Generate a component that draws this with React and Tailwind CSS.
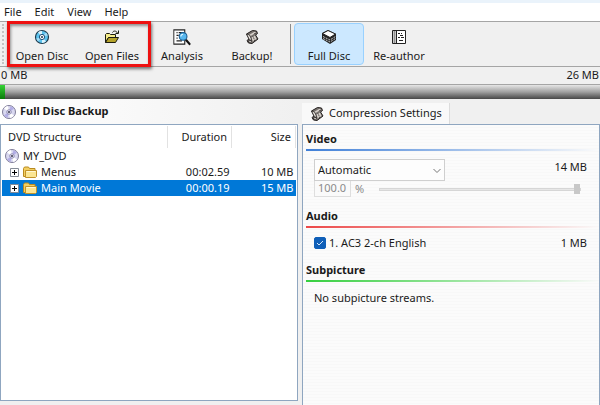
import { useState } from 'react'

const DiscIcon = () => (
  <svg className="size-4" viewBox="0 0 16 16">
    <circle cx="8" cy="8" r="6.5" fill="#5cc3ee" stroke="#1d3a4c" strokeWidth="1.2" />
    <path d="M8 8 4 3.2A6 6 0 0 1 8 2zM8 8l4 4.6A6 6 0 0 1 8 14z" fill="#d9f3fd" />
    <path d="M8 8 2.2 9.5A6 6 0 0 0 4 12.4zM8 8l5.8-1.6A6 6 0 0 0 12 3.5z" fill="#a3dcf5" />
    <circle cx="8" cy="8" r="2.6" fill="#fff" stroke="#1b4f78" />
    <circle cx="8" cy="8" r="1" fill="#1d3a4c" />
  </svg>
)

const OpenFolderIcon = () => (
  <svg className="size-4" viewBox="0 0 16 16">
    <path d="M1.5 13.5v-8l1-1h3l1 1h5v3h-7z" fill="#f5ec8a" stroke="#1c1c10" />
    <path d="m1.5 13.5 3-5h10l-3 5z" fill="#b5a32a" stroke="#1c1c10" />
    <path d="M8.5 3.5c1-2 3.5-2 5 .5M14.5 1.5v3h-3" fill="none" stroke="#1c1c10" />
  </svg>
)

const AnalysisIcon = () => (
  <svg className="size-4 scale-110" viewBox="0 0 16 16">
    <path d="M.5 1.5h10v13H.5z" fill="#fff" stroke="#222" />
    <path d="M3 4h1M5 4h4M3 6.5h2M3 9h1M3 11.5h5" stroke="#222" />
    <circle cx="9" cy="7.5" r="3.5" fill="#58b7ee" stroke="#1a5c91" />
    <path d="M7 7.5A2 2 0 0 1 9 5.5" stroke="#e3f7ff" fill="none" />
    <path d="m11.5 10.5 4 4.5" stroke="#111" strokeWidth="2" />
  </svg>
)

// strip of film curled at both ends
const FilmIcon = () => (
  <svg className="size-4" viewBox="0 0 16 16">
    <path d="M2.500 5 8.500 1.500l4 .5 1 2.500-2 1.500 2.500 4-6 4.500-3.500-.5-1.500-2.500 2-1.500z" fill="#77716d" stroke="#231f1e" />
    <path d="M5 6 10.500 2.800l1.500 1L6.500 7zM7.500 8.500l3.500-2 1.500 3.500L8.500 12.500z" fill="#d6d0ca" />
    <path d="M2.500 5 5.500 6l2.500 5.500-2.500-.8zM4 12.200l2-1 1.500 1-1.300 1.300z" fill="#f0ebe6" stroke="#231f1e" strokeWidth=".7" />
    <path d="m10.500 4.500 2 .2M9 7.500l2 4.500" fill="none" stroke="#231f1e" strokeDasharray="1 1" />
  </svg>
)

const StackIcon = () => (
  <svg className="size-4" viewBox="0 0 16 16">
    <path d="m1 4 6-3 8 4v6l-6 4-8-5z" fill="#222" />
    <path d="m1.5 4.5 5.5-3L14.5 5 9 8.5z" fill="#fff" stroke="#222" />
    <path d="M2 7.5 9 11l5.5-3.5M2 9.5 9 13l5.5-3.5" fill="none" stroke="#c9c9c9" strokeDasharray="2 1" />
  </svg>
)

const NotebookIcon = () => (
  <svg className="size-4" viewBox="0 0 16 16">
    <path d="M1.5 1.5h13v13h-13zM5.5 1.5v13" fill="#fff" stroke="#222" />
    <path d="M3.5 2.5v12" stroke="#222" strokeWidth="2" strokeDasharray="1 1" />
    <path d="M7 4.5h2M10 4.5h1M9 6.5h3M7 8.5h2M10 8.5h3M8 11.5h4" stroke="#222" />
  </svg>
)

const DvdIcon = () => (
  <svg className="size-4 shrink-0" viewBox="0 0 16 16">
    <circle cx="8" cy="8" r="6.5" fill="#d9d8f0" stroke="#7f7c98" />
    <path d="M8 8 3 4.5A6 6 0 0 1 7 2zM8 8l5 3.5A6 6 0 0 1 9 14z" fill="#fff" />
    <path d="M8 8 9.5 2.2A6 6 0 0 1 13 4.7zM8 8 6.5 13.8A6 6 0 0 1 3 11.3z" fill="#b3aee6" />
    <circle cx="8" cy="8" r="2.2" fill="#f7f7ff" stroke="#8a86ad" />
    <circle cx="8" cy="8" r="1" fill="#33304a" />
  </svg>
)

const FolderIcon = () => (
  <svg className="size-4 shrink-0" viewBox="0 0 16 16">
    <path d="M1.5 12.5v-8l1-1.5h4l1 1.5h5.5v8z" fill="#f3cf62" stroke="#b98a1f" />
    <path d="M3.5 13.5v-7h11v6l-1 1z" fill="#fbe694" stroke="#c2932a" />
    <path d="M4.5 7.5h9" stroke="#fff8d6" />
  </svg>
)

const ExpandIcon = () => (
  <svg className="size-[9px]" viewBox="0 0 9 9">
    <path d="M.5.5h8v8h-8z" fill="#fff" stroke="#848b96" />
    <path d="M2 4.5h5M4.5 2v5" stroke="#000" />
  </svg>
)

const ToolButton = ({ label, icon: Icon, active, onClick }) => (
  <button
    type="button"
    onClick={onClick}
    className={`w-[70px] h-[42px] flex flex-col items-center pt-[5px] rounded-sm border ${active ? 'bg-[#cce8ff] border-[#99d1ff]' : 'border-transparent'}`}
  >
    <Icon />
    <span className="mt-[3px] leading-4 whitespace-nowrap">{label}</span>
  </button>
)

const Section = ({ title, line, children }) => (
  <section>
    <h2 className="font-bold leading-4">{title}</h2>
    <div className={`h-0.5 mt-0.5 bg-linear-to-r ${line} to-transparent`} />
    {children}
  </section>
)

const rows = [
  { name: 'Menus', duration: '00:02.59', size: '10 MB' },
  { name: 'Main Movie', duration: '00:00.19', size: '15 MB' },
]

export default function App() {
  const [mode, setMode] = useState('Full Disc')
  const [selected, setSelected] = useState('Main Movie')

  return (
    <div className="min-h-screen flex flex-col bg-[#f0f0f0] text-[#1a1a1a] text-[11px] font-['Noto_Sans',sans-serif]">
      <nav className="h-[21px] flex items-center gap-[13px] px-1 border-t-3 border-[#eaf3fb] bg-white leading-4">
        {['File', 'Edit', 'View', 'Help'].map(item => (
          <button key={item} type="button">{item}</button>
        ))}
      </nav>

      <div className="h-[46px] flex items-center border-y border-[#a5a5a5]">
        <div className="h-10 ml-0.5 mr-[3px] border-l-2 border-dotted border-[#c4c4c4]" />
        <div className="relative flex">
          <ToolButton label="Open Disc" icon={DiscIcon} />
          <ToolButton label="Open Files" icon={OpenFolderIcon} />
          <div className="absolute -inset-y-0.5 left-0 -right-1 border-3 border-[#ee1111] shadow-[1px_2px_3px_#0008,inset_1px_2px_3px_#0006] pointer-events-none" />
        </div>
        <ToolButton label="Analysis" icon={AnalysisIcon} />
        <ToolButton label="Backup!" icon={FilmIcon} />
        <div className="h-10 w-px mx-[3px] bg-[#8c8c8c]" />
        <ToolButton label="Full Disc" icon={StackIcon} active={mode === 'Full Disc'} onClick={() => setMode('Full Disc')} />
        <ToolButton label="Re-author" icon={NotebookIcon} active={mode === 'Re-author'} onClick={() => setMode('Re-author')} />
      </div>

      <div className="h-[17px] flex justify-between px-px leading-4">
        <span>0 MB</span>
        <span>26 MB</span>
      </div>
      <div className="h-[15px] border-t border-[#a5a5a5] bg-linear-to-b from-[#e6e6e6] via-[#a0a0a0] to-[#484848]">
        <div className="h-full w-[5px] bg-linear-to-b from-[#35d435] to-[#087a08]" />
      </div>

      <main className="grow grid grid-cols-[298px_1fr] gap-1">
        <section className="flex flex-col pb-1">
          <h1 className="h-[25px] flex items-center gap-[3px] pl-px font-bold bg-linear-to-r from-white to-[#f0f0f0]">
            <DvdIcon />
            Full Disc Backup
          </h1>
          <div className="grow border border-[#8fa6c0] bg-white p-px">
            <table className="w-full table-fixed border-collapse">
              <colgroup>
                <col />
                <col className="w-16" />
                <col className="w-16" />
              </colgroup>
              <thead>
                <tr className="h-[22px]">
                  <th className="pl-1.5 font-normal text-left border-r border-[#e2e2e2]">DVD Structure</th>
                  <th className="pr-1 font-normal text-right border-r border-[#e2e2e2]">Duration</th>
                  <th className="pr-1 font-normal text-right border-r border-[#e2e2e2]">Size</th>
                </tr>
              </thead>
              <tbody>
                <tr>
                  <td colSpan={3}>
                    <div className="h-4 flex items-center gap-[3px] pl-0.5">
                      <DvdIcon />
                      MY_DVD
                    </div>
                  </td>
                </tr>
                {rows.map(row => (
                  <tr
                    key={row.name}
                    onClick={() => setSelected(row.name)}
                    className={`leading-4 ${row.name === selected ? 'bg-[#0078d7] text-white' : ''}`}
                  >
                    <td>
                      <div className="h-4 flex items-center pl-2">
                        <button type="button" aria-label={`Expand ${row.name}`} className="mr-[3px]"><ExpandIcon /></button>
                        <FolderIcon />
                        <span className="ml-[3px]">{row.name}</span>
                      </div>
                    </td>
                    <td className="pr-0.5 text-right">{row.duration}</td>
                    <td className="pr-0.5 text-right">{row.size}</td>
                  </tr>
                ))}
              </tbody>
            </table>
          </div>
        </section>

        <section className="flex flex-col">
          <div className="h-[25px] flex items-end">
            <button type="button" className="h-[21px] flex items-center gap-1 px-[7px] border-r border-[#dcdcdc] bg-[#f9f9f9] whitespace-nowrap">
              <FilmIcon />
              Compression Settings
            </button>
          </div>
          <div className="grow flex flex-col gap-[11px] border border-b-0 border-[#8fa6c0] pl-[3px] py-1.5 bg-[repeating-linear-gradient(#fbfbfb_0_2px,#f8f8f8_2px_3px)]">
            <Section title="Video" line="from-[#3f7fd8]">
              <div className="flex flex-col pl-2 pr-3 pt-2">
                <div className="flex justify-between">
                  <div className="relative">
                    <select aria-label="Compression mode" className="appearance-none w-[131px] h-[22px] pl-[3px] border border-[#cfcfcf] bg-[#fdfdfd]">
                      <option>Automatic</option>
                    </select>
                    <svg className="absolute right-1 top-2 w-2 h-2 pointer-events-none" viewBox="0 0 8 8">
                      <path d="m.5 2 3.5 3.5L7.5 2" fill="none" stroke="#777" />
                    </svg>
                  </div>
                  <span className="leading-4">14 MB</span>
                </div>
                <div className="flex items-center text-[#8a8a8a]">
                  <input id="ratio" disabled defaultValue="100.0" className="w-[37px] h-4 pl-[3px] border border-t-0 border-[#dedede] bg-[#fafafa]" />
                  <label htmlFor="ratio" className="w-7 pl-1 leading-4">%</label>
                  <input
                    type="range"
                    aria-label="Compression level"
                    disabled
                    defaultValue={100}
                    className="grow mr-1.5 h-[3px] appearance-none border border-[#d6d6d6] bg-[#e7e7e7] [&::-webkit-slider-thumb]:appearance-none [&::-webkit-slider-thumb]:w-1.5 [&::-webkit-slider-thumb]:h-2.5 [&::-webkit-slider-thumb]:bg-[#c8c8c8]"
                  />
                </div>
              </div>
            </Section>

            <Section title="Audio" line="from-[#ec4848]">
              <div className="flex justify-between pl-2 pr-3 pt-[7px] leading-4">
                <label className="flex items-center gap-[3px]">
                  <span className="relative flex">
                    <input type="checkbox" defaultChecked className="peer appearance-none size-3 rounded-xs border border-[#0f5fb8] checked:bg-[#0f5fb8]" />
                    <svg className="absolute inset-0 size-3 hidden peer-checked:block pointer-events-none" viewBox="0 0 12 12">
                      <path d="m3 6 2 2 4-4" fill="none" stroke="#d5e8fb" />
                    </svg>
                  </span>
                  1. AC3 2-ch English
                </label>
                <span>1 MB</span>
              </div>
            </Section>

            <Section title="Subpicture" line="from-[#36cf3f]">
              <p className="pl-2 pt-2 leading-4">No subpicture streams.</p>
            </Section>
          </div>
        </section>
      </main>
    </div>
  )
}
